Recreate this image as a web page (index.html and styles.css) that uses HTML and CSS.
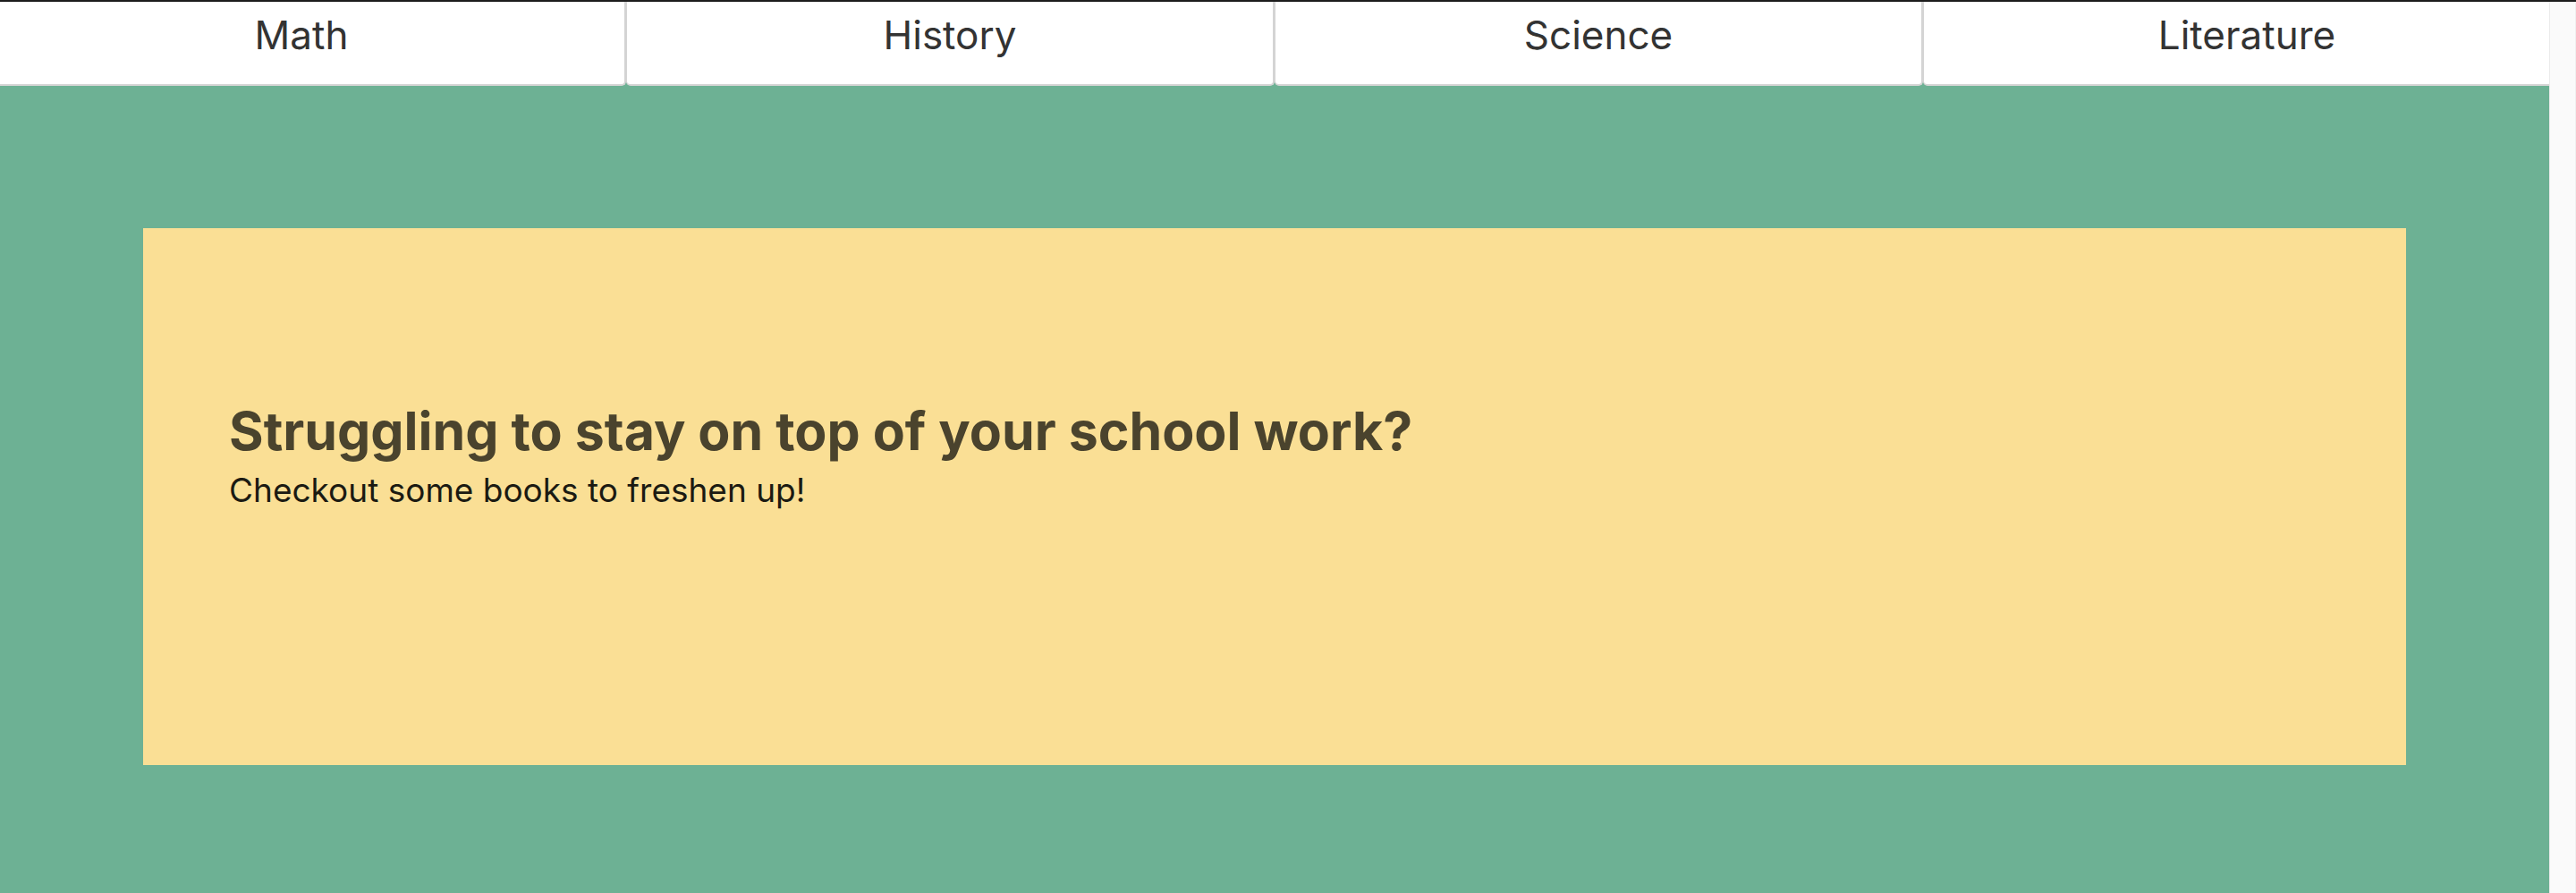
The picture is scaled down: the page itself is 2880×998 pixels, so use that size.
FILE: index.html
```html
<!DOCTYPE html>
<html lang="en">
<head>
<meta charset="utf-8">
<title>Study Books</title>
<link rel="stylesheet" href="styles.css">
</head>
<body>
<div class="window-edge"></div>
<div class="page">
  <header class="nav-wrap">
    <nav class="tabs">
      <a class="tab" href="#">Math</a>
      <a class="tab" href="#">History</a>
      <a class="tab" href="#">Science</a>
      <a class="tab" href="#">Literature</a>
    </nav>
  </header>
  <main class="hero">
    <section class="card">
      <h1 class="card-title">Struggling to stay on top of your school work?</h1>
      <p class="card-text">Checkout some books to freshen up!</p>
    </section>
  </main>
</div>
<div class="scroll-gutter"></div>
</body>
</html>
```
FILE: styles.css
```css
html,
body {
  height: 100%;
}
body {
  margin: 0;
  display: flex;
  overflow: hidden;
  font-family: Inter, "Noto Sans", "Liberation Sans", sans-serif;
  background: #fafafa;
}
.window-edge {
  position: fixed;
  top: 0;
  left: 0;
  right: 0;
  height: 2px;
  background: #1c1c1c;
  z-index: 10;
}
.page {
  flex: 1;
  min-width: 0;
  background: #6db194;
  overflow: hidden;
}
.scroll-gutter {
  flex: 0 0 30px;
  box-sizing: border-box;
  background: #fafafa;
  border-left: 1px solid #ebebeb;
  border-right: 1px solid #f0f0f0;
}
.nav-wrap {
  overflow: hidden;
}
.tabs {
  display: grid;
  grid-template-columns: repeat(4, 1fr);
  width: calc(100% + 50px);
  margin-left: -25px;
}
.tab {
  display: block;
  box-sizing: border-box;
  height: 96px;
  padding-top: 12px;
  background: #ffffff;
  border: solid #d4d4d4;
  border-width: 0 2px 2px 1px;
  border-radius: 0 0 5px 5px;
  text-align: center;
  font-size: 44px;
  color: #333333;
  text-decoration: none;
}
.hero {
  display: block;
  padding: 159px 160px 160px;
}
.card {
  box-sizing: border-box;
  height: 600px;
  padding: 191px 96px 0;
  background: #fadf95;
}
.card-title {
  margin: 0;
  font-size: 59px;
  line-height: 72px;
  font-weight: 700;
  color: #4a432d;
}
.card-text {
  margin: 8px 0 0;
  font-size: 37px;
  line-height: 44px;
  color: #1b1a12;
}
```
